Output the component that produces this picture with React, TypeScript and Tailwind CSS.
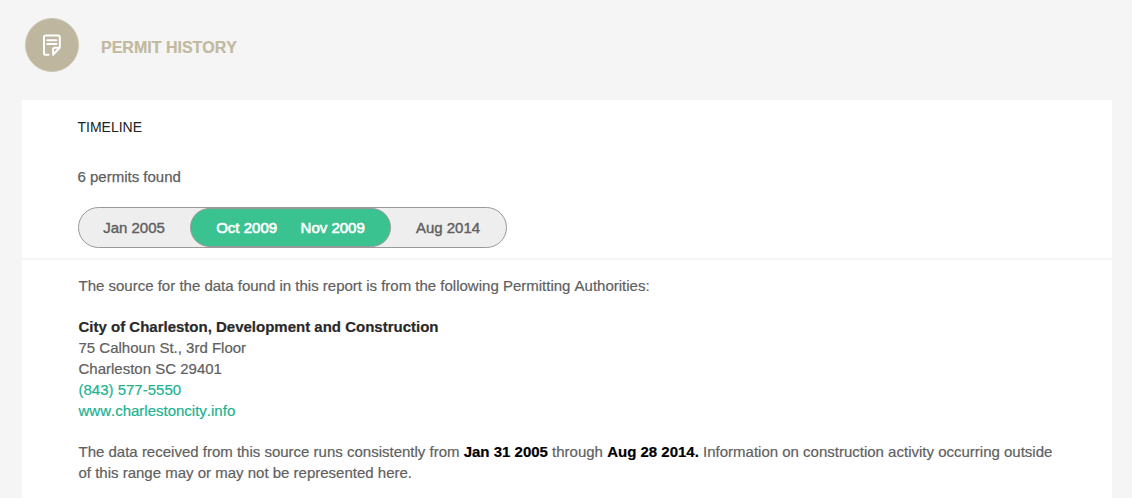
function NoteIcon() {
  return (
    <svg width="20" height="23" viewBox="0 0 20 23" fill="none" stroke="#fff" strokeWidth="2" strokeLinecap="round" strokeLinejoin="round">
      <path d="M6.6 20.8H3.6Q2 20.8 2 19.2V2.9Q2 1.4 3.6 1.4H16.2Q17.8 1.4 17.8 2.9V13.6L11.1 20.8V15.2Q11.1 13.7 12.6 13.7H17.4" />
      <path d="M5.2 6.2H14.4M5.2 10H14.4" />
    </svg>
  );
}

export default function App() {
  return (
    <main className="h-[498px] overflow-hidden bg-[#f5f5f5] pl-[22px] pr-5 font-['Liberation_Sans',Arial,sans-serif] text-[15px] leading-[21px] text-[#606060] [font-kerning:none]">
      <header className="flex h-[100px] items-start pt-[18px] pl-[3px]">
        <div className="flex size-[54px] items-center justify-center rounded-full border border-[#cac5b0] bg-[#beb69f]">
          <NoteIcon />
        </div>
        <h1 className="mt-[19px] ml-[22px] text-base leading-[21px] font-bold text-[#c1b9a0] [-webkit-text-stroke:0.2px]">PERMIT HISTORY</h1>
      </header>
      <div className="h-[398px] bg-white">
        <section className="h-[160px] border-b-2 border-[#f5f5f5] pt-[17px] pl-14">
          <h2 className="-ml-[0.5px] text-sm leading-[21px] text-[#222]">TIMELINE</h2>
          <p className="mt-7 -ml-[0.5px] [-webkit-text-stroke:0.25px]">6 permits found</p>
          <div className="mt-5 flex h-[41px] w-[429px] items-stretch rounded-full border border-[#999] bg-[#eee] [-webkit-text-stroke:0.4px]">
            <span className="flex w-[110px] items-center justify-center">Jan 2005</span>
            <div className="ml-px flex w-[201px] items-center justify-center gap-[23.5px] rounded-full border border-[#999] bg-[#3bc291] text-white [-webkit-text-stroke:0.6px]">
              <span>Oct 2009</span>
              <span>Nov 2009</span>
            </div>
            <span className="flex flex-1 items-center justify-center pr-px">Aug 2014</span>
          </div>
        </section>
        <section className="pt-[15px] pl-[56.5px] [-webkit-text-stroke:0.2px]">
          <p>The source for the data found in this report is from the following Permitting Authorities:</p>
          <address className="mt-5 not-italic">
            <strong className="block text-[#292929]">City of Charleston, Development and Construction</strong>
            <span className="block">75 Calhoun St., 3rd Floor</span>
            <span className="block">Charleston SC 29401</span>
            <a className="block text-[#20b28f]" href="tel:8435775550">(843) 577-5550</a>
            <a className="block text-[#20b28f]" href="#source">www.charlestoncity.info</a>
          </address>
          <p className="mt-5 w-[985px]">
            The data received from this source runs consistently from <strong className="text-black">Jan 31 2005</strong> through <strong className="text-black">Aug 28 2014.</strong> Information on construction activity occurring outside of this range may or may not be represented here.
          </p>
        </section>
      </div>
    </main>
  );
}
